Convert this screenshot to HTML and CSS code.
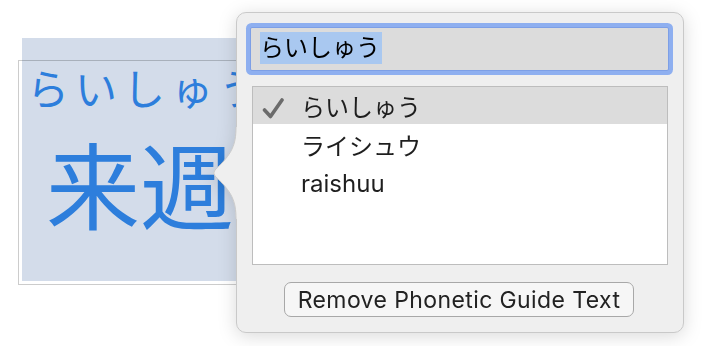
FILE: index.html
```html
<!DOCTYPE html>
<html lang="ja">
<head>
<meta charset="utf-8">
<link rel="stylesheet" href="styles.css">
</head>
<body>
<div class="stage">
  <div class="selection"></div>
  <div class="frame">
    <div class="ruby">らいしゅう</div>
    <div class="base">来週</div>
  </div>
  <div class="popover">
    <svg class="arrow" width="26" height="92" viewBox="0 0 26 92">
      <path d="M26,0 L24,0 C24,18 20,27 3,43 Q0.5,46 3,49 C20,65 24,74 24,92 L26,92 Z" fill="#efefef"/>
      <path d="M24,0 C24,18 20,27 3,43 Q0.5,46 3,49 C20,65 24,74 24,92" fill="none" stroke="#c9c9c9" stroke-width="1"/>
    </svg>
    <div class="field"><span class="sel">らいしゅう</span></div>
    <div class="list">
      <div class="row current">
        <svg class="check" width="22" height="22" viewBox="0 0 22 22"><path d="M2.5,13 L8.5,19.5 L20,3" fill="none" stroke="#6b6b6b" stroke-width="3.6" stroke-linecap="round" stroke-linejoin="round"/></svg>
        <span>らいしゅう</span>
      </div>
      <div class="row"><span>ライシュウ</span></div>
      <div class="row"><span>raishuu</span></div>
    </div>
    <div class="actions"><button class="btn">Remove Phonetic Guide Text</button></div>
  </div>
</div>
</body>
</html>
```

FILE: styles.css
```css
html, body {
  margin: 0;
  padding: 0;
  background: #ffffff;
}
.stage {
  position: relative;
  width: 706px;
  height: 346px;
  overflow: hidden;
  font-family: Inter, "Noto Sans CJK JP", sans-serif;
}
.selection {
  position: absolute;
  left: 22px;
  top: 38px;
  width: 230px;
  height: 243px;
  background: #d3dcea;
}
.frame {
  position: relative;
  box-sizing: border-box;
  margin: 60px 0 0 18px;
  width: 240px;
  height: 225px;
  border: 1px solid rgba(0, 0, 0, 0.2);
  border-right: none;
  color: #2d7edc;
  font-family: "Noto Sans CJK JP", sans-serif;
}
.ruby {
  margin: 5px 0 0 8px;
  font-size: 42px;
  line-height: 42px;
  letter-spacing: 6px;
  white-space: nowrap;
}
.base {
  margin: 27px 0 0 27px;
  font-size: 94px;
  line-height: 94px;
  white-space: nowrap;
}
.popover {
  position: absolute;
  left: 236px;
  top: 12px;
  box-sizing: border-box;
  width: 448px;
  height: 321px;
  padding: 14px 14px 0 13px;
  background: #efefef;
  border: 1px solid #c9c9c9;
  border-radius: 10px;
  filter: drop-shadow(0 3px 9px rgba(0, 0, 0, 0.15));
}
.arrow {
  position: absolute;
  left: -25px;
  top: 114px;
}
.field {
  box-sizing: border-box;
  height: 44px;
  width: 419px;
  border: 1px solid #7d9fe6;
  border-radius: 2px;
  background: #dcdcdc;
  box-shadow: 0 0 0 4px #8eaff0;
  padding: 4px 0 0 9px;
  font-size: 24px;
  line-height: 32px;
  color: #000;
}
.sel {
  display: inline-block;
  background: #a9c8f0;
  padding: 0 2px 0 0;
}
.list {
  box-sizing: border-box;
  margin: 15px 0 0 2px;
  width: 416px;
  height: 179px;
  border: 1px solid #bdbdbd;
  background: #ffffff;
}
.row {
  display: flex;
  align-items: center;
  height: 37px;
  margin-bottom: 2px;
  padding-left: 48px;
  position: relative;
  font-size: 24px;
  color: #1e1e1e;
}
.row.current {
  background: #dcdcdc;
}
.check {
  position: absolute;
  left: 9px;
  top: 10px;
}
.actions {
  display: flex;
  justify-content: center;
  margin-top: 17px;
  padding-right: 1px;
}
.btn {
  box-sizing: border-box;
  width: 350px;
  height: 35px;
  border: 1px solid #a8a8a8;
  border-radius: 7px;
  background: #f6f6f6;
  font-family: Inter, sans-serif;
  font-size: 23px;
  letter-spacing: 0.4px;
  color: #222;
  padding: 0;
}
```
